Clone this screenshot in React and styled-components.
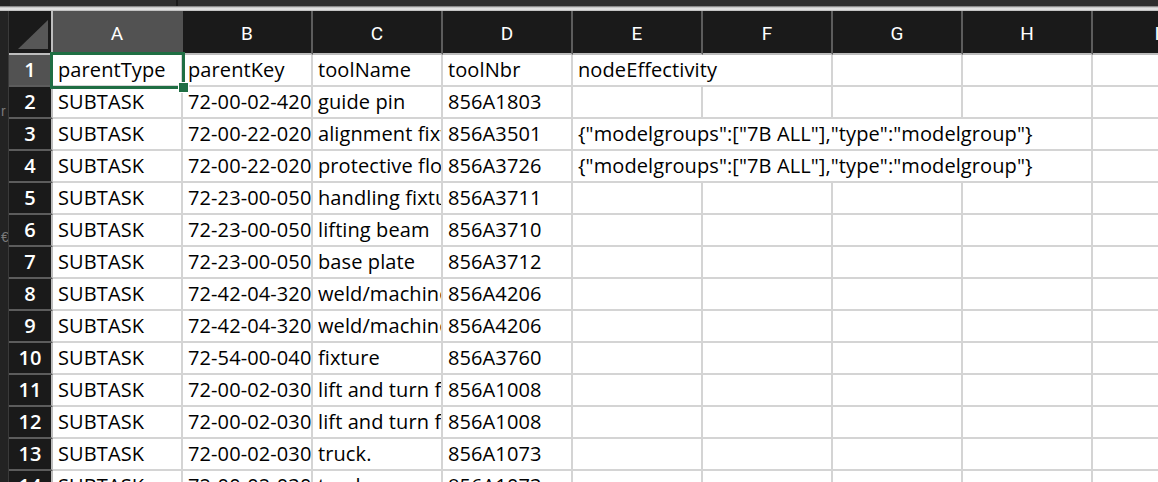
import React from 'react';
import styled, { createGlobalStyle } from 'styled-components';

const GlobalStyle = createGlobalStyle`
  html, body {
    margin: 0;
    padding: 0;
    background: #1e1e1e;
    overflow: hidden;
    height: 482px;
  }
  #root {
    width: 1158px;
    height: 482px;
    overflow: hidden;
  }
`;

const COLS = ['A', 'B', 'C', 'D', 'E', 'F', 'G', 'H', 'I'];
const JSON_TEXT = '{"modelgroups":["7B ALL"],"type":"modelgroup"}';

const ROWS = [
  ['parentType', 'parentKey', 'toolName', 'toolNbr', { text: 'nodeEffectivity', span: 2 }],
  ['SUBTASK', '72-00-02-420-801', 'guide pin', '856A1803'],
  ['SUBTASK', '72-00-22-020-801', 'alignment fixture', '856A3501', { text: JSON_TEXT, span: 4 }],
  ['SUBTASK', '72-00-22-020-802', 'protective floor', '856A3726', { text: JSON_TEXT, span: 4 }],
  ['SUBTASK', '72-23-00-050-801', 'handling fixture', '856A3711'],
  ['SUBTASK', '72-23-00-050-802', 'lifting beam', '856A3710'],
  ['SUBTASK', '72-23-00-050-803', 'base plate', '856A3712'],
  ['SUBTASK', '72-42-04-320-801', 'weld/machine fixture', '856A4206'],
  ['SUBTASK', '72-42-04-320-802', 'weld/machine fixture', '856A4206'],
  ['SUBTASK', '72-54-00-040-801', 'fixture', '856A3760'],
  ['SUBTASK', '72-00-02-030-801', 'lift and turn fixture', '856A1008'],
  ['SUBTASK', '72-00-02-030-802', 'lift and turn fixture', '856A1008'],
  ['SUBTASK', '72-00-02-030-803', 'truck.', '856A1073'],
  ['SUBTASK', '72-00-02-030-804', 'truck.', '856A1073'],
];

export default function App() {
  return (
    <>
      <GlobalStyle />
      <Window>
        <TopBar>
          <NameBox />
          <FormulaBox />
        </TopBar>
        <Splitter />
        <Body>
          <Gutter>
            <GutterGlyph $top={92}>r</GutterGlyph>
            <GutterGlyph $top={218}>€</GutterGlyph>
          </Gutter>
          <Sheet>
            <Corner>
              <CornerTriangle />
            </Corner>
            {COLS.map((c, i) => (
              <ColHeader key={c} $selected={i === 0}>{c}</ColHeader>
            ))}
            {ROWS.map((row, r) => {
              const cells = [];
              let used = 0;
              row.forEach((v, i) => {
                const item = typeof v === 'string' ? { text: v, span: 1 } : v;
                cells.push(
                  <Cell key={i} $span={item.span} $first={r === 0 && i === 0}>
                    <CellText>{item.text}</CellText>
                    {r === 0 && i === 0 && (
                      <Selection>
                        <FillHandle />
                      </Selection>
                    )}
                  </Cell>
                );
                used += item.span;
              });
              while (used < COLS.length) {
                cells.push(<Cell key={'e' + used} $span={1} />);
                used += 1;
              }
              return (
                <React.Fragment key={r}>
                  <RowHeader $selected={r === 0}>{r + 1}</RowHeader>
                  {cells}
                </React.Fragment>
              );
            })}
          </Sheet>
        </Body>
      </Window>
    </>
  );
}

const Window = styled.div`
  display: flex;
  flex-direction: column;
  width: 1158px;
  height: 482px;
  overflow: hidden;
  background: #1e1e1e;
`;

const TopBar = styled.div`
  display: flex;
  height: 6px;
  background: #242424;
`;

const NameBox = styled.div`
  width: 166px;
  margin-left: 10px;
  background: #2e2e2e;
  border-right: 2px solid #1a1a1a;
`;

const FormulaBox = styled.div`
  flex: 1;
  background: #2e2e2e;
`;

const Splitter = styled.div`
  height: 5px;
  background: linear-gradient(to bottom, #6a6a6a 0%, #c9c9c9 30%, #ececec 60%, #b5b5b5 100%);
`;

const Body = styled.div`
  display: flex;
  flex: 1;
  min-height: 0;
`;

const Gutter = styled.div`
  position: relative;
  width: 8px;
  flex: none;
  background: #232323;
  border-right: 1px solid #3a3a3a;
  overflow: hidden;
`;

const GutterGlyph = styled.span`
  position: absolute;
  left: 1px;
  top: ${p => p.$top}px;
  font-family: 'Liberation Sans', sans-serif;
  font-size: 14px;
  color: #7a7a7a;
`;

const Sheet = styled.div`
  display: grid;
  grid-template-columns: 44px repeat(9, 130px);
  grid-template-rows: 44px;
  grid-auto-rows: 32px;
  background: #ffffff;
  font-family: 'Open Sans', sans-serif;
`;

const Corner = styled.div`
  position: relative;
  background: #1a1a1a;
  border-right: 2px solid #bdbdbd;
  border-bottom: 2px solid #bdbdbd;
`;

const CornerTriangle = styled.div`
  position: absolute;
  right: 3px;
  bottom: 4px;
  width: 30px;
  height: 29px;
  background: #575757;
  clip-path: polygon(100% 0, 100% 100%, 0 100%);
`;

const ColHeader = styled.div`
  display: flex;
  align-items: center;
  justify-content: center;
  background: ${p => (p.$selected ? '#525252' : '#1a1a1a')};
  border-right: 2px solid ${p => (p.$selected ? '#525252' : '#5c5c5c')};
  border-bottom: 2px solid #bdbdbd;
  color: #ffffff;
  font-family: Roboto, sans-serif;
  font-size: 19px;
  padding-top: 2px;
`;

const RowHeader = styled.div`
  display: flex;
  align-items: center;
  justify-content: center;
  background: ${p => (p.$selected ? '#525252' : '#1a1a1a')};
  border-right: 2px solid #bdbdbd;
  border-bottom: 2px solid #5c5c5c;
  color: #ffffff;
  font-family: 'Open Sans', sans-serif;
  font-weight: 600;
  font-size: 20px;
  padding-bottom: 1px;
`;

const Cell = styled.div`
  position: relative;
  grid-column: span ${p => p.$span};
  display: flex;
  align-items: flex-end;
  min-width: 0;
  border-right: 2px solid #d4d4d4;
  border-bottom: 2px solid #d4d4d4;
  padding: 0 0 1px 5px;
  overflow: ${p => (p.$first ? 'visible' : 'hidden')};
  z-index: ${p => (p.$first ? 2 : 'auto')};
`;

const CellText = styled.span`
  white-space: nowrap;
  font-size: 20px;
  line-height: 28px;
  letter-spacing: 0.1px;
  color: #000000;
`;

const Selection = styled.div`
  position: absolute;
  top: -3px;
  left: -3px;
  right: -4px;
  bottom: -4px;
  border: 3px solid #1f6e43;
  pointer-events: none;
`;

const FillHandle = styled.div`
  position: absolute;
  right: -7px;
  bottom: -7px;
  width: 9px;
  height: 9px;
  background: #1f6e43;
  border: 1px solid #ffffff;
`;
